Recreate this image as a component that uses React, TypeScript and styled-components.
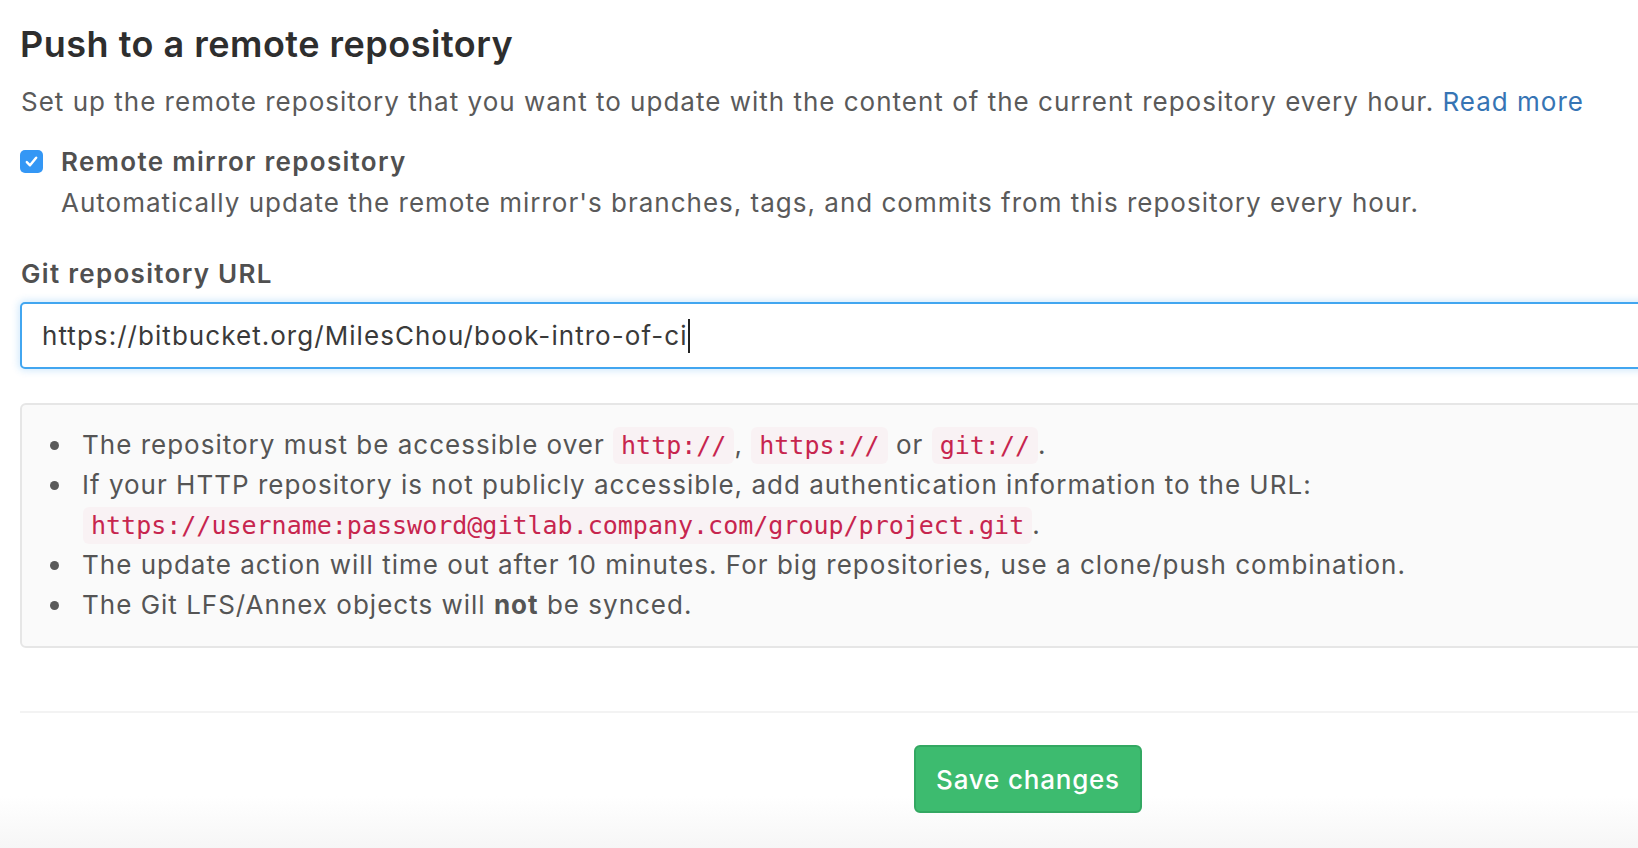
import React from "react";
import styled, { createGlobalStyle } from "styled-components";

const GlobalStyle = createGlobalStyle`
  html, body {
    margin: 0;
    padding: 0;
    min-height: 100vh;
    overflow: hidden;
  }
  body {
    font-family: "Inter", "Noto Sans", sans-serif;
    background: linear-gradient(to bottom, #ffffff 0px, #ffffff 796px, #f6f6f6 848px);
    background-repeat: no-repeat;
    color: #555555;
  }
`;

const Page = styled.div`
  width: 1720px;
  padding: 22px 0 0 20px;
  box-sizing: border-box;
`;

const Title = styled.h4`
  margin: 0;
  font-size: 36px;
  line-height: 44px;
  font-weight: 600;
  letter-spacing: 0.5px;
  color: #2e2e2e;
`;

const Lead = styled.p`
  margin: 18px 0 0 1px;
  font-size: 26px;
  line-height: 36px;
  letter-spacing: 1px;
  color: #5a5a5a;
`;

const Link = styled.a`
  color: #3674b4;
  text-decoration: none;
`;

const CheckRow = styled.div`
  display: flex;
  align-items: flex-start;
  gap: 18px;
  margin-top: 24px;
`;

const CheckBox = styled.span`
  flex: none;
  width: 23px;
  height: 23px;
  margin-top: 6px;
  border-radius: 5px;
  background: #3497f5;
  display: flex;
  align-items: center;
  justify-content: center;
`;

const CheckText = styled.div`
  display: flex;
  flex-direction: column;
  gap: 5px;
`;

const CheckLabel = styled.label`
  font-size: 26px;
  line-height: 36px;
  font-weight: 600;
  letter-spacing: 1.3px;
  color: #505050;
`;

const HelpText = styled.span`
  font-size: 26px;
  line-height: 36px;
  letter-spacing: 1px;
  color: #5a5a5a;
`;

const FieldLabel = styled.label`
  display: block;
  margin-top: 35px;
  margin-left: 1px;
  font-size: 26px;
  line-height: 36px;
  font-weight: 600;
  letter-spacing: 1.3px;
  color: #505050;
`;

const InputShell = styled.div`
  margin-top: 10px;
  height: 67px;
  box-sizing: border-box;
  border: 2px solid #42a6f0;
  border-radius: 5px;
  box-shadow: 0 0 7px 2px rgba(66, 166, 240, 0.22);
  padding: 0 20px;
  display: flex;
  align-items: center;
  font-size: 26px;
  letter-spacing: 1.05px;
  color: #3a3a3a;
  background: #fff;
`;

const Caret = styled.span`
  display: inline-block;
  width: 2px;
  height: 34px;
  background: #222;
`;

const InfoBox = styled.div`
  margin-top: 34px;
  background: #fafafa;
  border: 2px solid #e6e6e6;
  border-radius: 6px;
  padding: 20px 0 21px 0;
`;

const List = styled.ul`
  margin: 0;
  padding: 0 0 0 61px;
  list-style: none;
`;

const Item = styled.li`
  font-size: 26px;
  line-height: 40px;
  letter-spacing: 1px;
  color: #555555;

  &::before {
    content: "";
    display: inline-block;
    width: 9px;
    height: 9px;
    border-radius: 50%;
    background: #5a5a5a;
    margin-left: -33px;
    margin-right: 23px;
    vertical-align: 4px;
  }
`;

const Code = styled.code`
  font-family: "DejaVu Sans Mono", "Liberation Mono", monospace;
  font-size: 25px;
  line-height: 1;
  letter-spacing: 0;
  color: #c7254e;
  background: #f9f2f4;
  border-radius: 6px;
  padding: 4px 8px;
`;

const Divider = styled.hr`
  margin: 63px 0 0 0;
  border: 0;
  border-top: 2px solid #f3f3f3;
`;

const Actions = styled.div`
  padding: 32px 0 0 894px;
`;

const SaveButton = styled.button`
  width: 228px;
  height: 68px;
  box-sizing: border-box;
  border: 2px solid #33a862;
  border-radius: 6px;
  background: #3dbb6f;
  color: #ffffff;
  font-family: "Inter", "Noto Sans", sans-serif;
  font-size: 26px;
  font-weight: 500;
  letter-spacing: 0.8px;
  cursor: pointer;
`;

export default function App() {
  return (
    <>
      <GlobalStyle />
      <Page>
        <Title>Push to a remote repository</Title>
        <Lead>
          Set up the remote repository that you want to update with the content of the current
          repository every hour. <Link href="#">Read more</Link>
        </Lead>
        <CheckRow>
          <CheckBox>
            <svg width="17" height="17" viewBox="0 0 16 16" fill="none">
              <path d="M3.6 8.6 L6.6 11.6 L12.4 4.4" stroke="#fff" strokeWidth="2.3" strokeLinecap="round" strokeLinejoin="round" />
            </svg>
          </CheckBox>
          <CheckText>
            <CheckLabel>Remote mirror repository</CheckLabel>
            <HelpText>
              Automatically update the remote mirror's branches, tags, and commits from this
              repository every hour.
            </HelpText>
          </CheckText>
        </CheckRow>
        <FieldLabel>Git repository URL</FieldLabel>
        <InputShell>
          https://bitbucket.org/MilesChou/book-intro-of-ci
          <Caret />
        </InputShell>
        <InfoBox>
          <List>
            <Item>
              The repository must be accessible over <Code>http://</Code>, <Code>https://</Code> or{" "}
              <Code>git://</Code>.
            </Item>
            <Item>
              If your HTTP repository is not publicly accessible, add authentication information to
              the URL: <Code>https://username:password@gitlab.company.com/group/project.git</Code>.
            </Item>
            <Item>
              The update action will time out after 10 minutes. For big repositories, use a
              clone/push combination.
            </Item>
            <Item>
              The Git LFS/Annex objects will <strong>not</strong> be synced.
            </Item>
          </List>
        </InfoBox>
        <Divider />
        <Actions>
          <SaveButton type="button">Save changes</SaveButton>
        </Actions>
      </Page>
    </>
  );
}
